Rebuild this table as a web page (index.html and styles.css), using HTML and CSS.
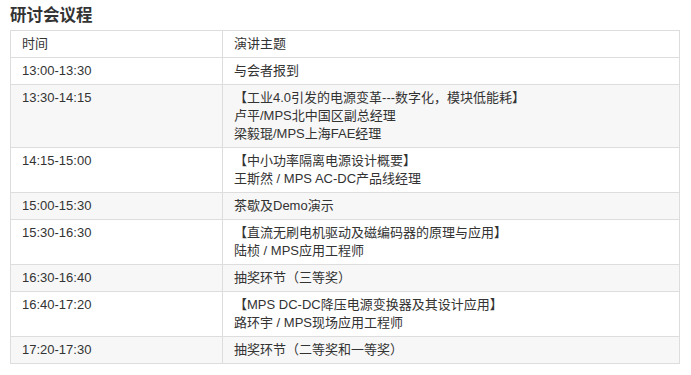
FILE: index.html
```html
<!DOCTYPE html>
<html lang="zh">
<head>
<meta charset="utf-8">
<link rel="stylesheet" href="styles.css">
</head>
<body>
<div class="page">
  <h2 class="title">研讨会议程</h2>
  <table class="agenda">
    <colgroup><col class="c-time"><col class="c-topic"></colgroup>
    <tr><td>时间</td><td>演讲主题</td></tr>
    <tr><td>13:00-13:30</td><td>与会者报到</td></tr>
    <tr class="alt"><td>13:30-14:15</td><td>【工业4.0引发的电源变革---数字化，模块低能耗】<br>卢平/MPS北中国区副总经理<br>梁毅琨/MPS上海FAE经理</td></tr>
    <tr><td>14:15-15:00</td><td>【中小功率隔离电源设计概要】<br>王斯然 / MPS AC-DC产品线经理</td></tr>
    <tr class="alt"><td>15:00-15:30</td><td>茶歇及Demo演示</td></tr>
    <tr><td>15:30-16:30</td><td>【直流无刷电机驱动及磁编码器的原理与应用】<br>陆桢 / MPS应用工程师</td></tr>
    <tr class="alt"><td>16:30-16:40</td><td>抽奖环节（三等奖）</td></tr>
    <tr><td>16:40-17:20</td><td>【MPS DC-DC降压电源变换器及其设计应用】<br>路环宇 / MPS现场应用工程师</td></tr>
    <tr class="alt"><td>17:20-17:30</td><td>抽奖环节（二等奖和一等奖）</td></tr>
  </table>
</div>
</body>
</html>
```
FILE: styles.css
```css
html, body {
  margin: 0;
  padding: 0;
  background: #fff;
}
.page {
  padding: 5px 10px 0 10px;
  font-family: "Liberation Sans", Arial, "Noto Sans CJK SC", sans-serif;
  color: #333;
}
.title {
  margin: 0 0 5px 0;
  font-size: 16.5px;
  line-height: 20px;
  font-weight: bold;
  color: #333;
}
.agenda {
  width: 670px;
  border-collapse: collapse;
  font-size: 13px;
  line-height: 18px;
}
.c-time { width: 212px; }
.agenda td {
  border: 1px solid #ddd;
  padding: 4px 11px 4px 11px;
  vertical-align: top;
  text-align: left;
}
.agenda tr.alt td {
  background: #f7f7f7;
}
```
